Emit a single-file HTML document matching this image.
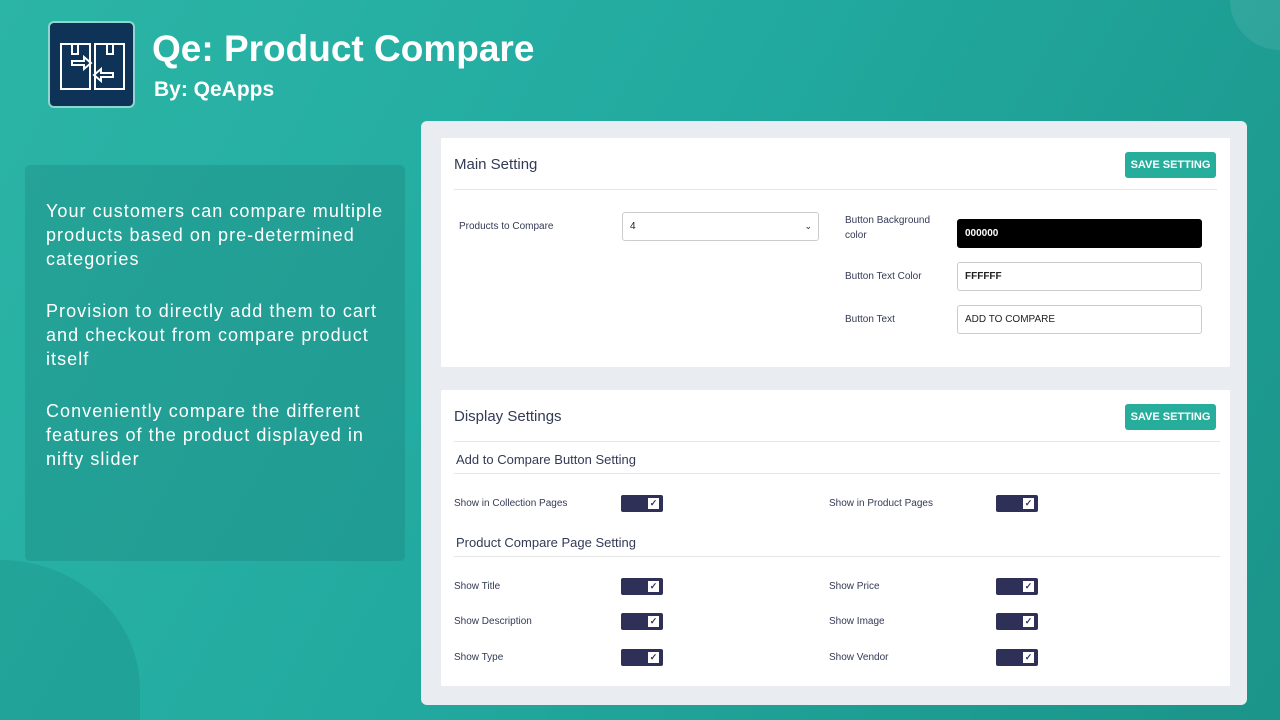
<!DOCTYPE html>
<html><head><style>
*{margin:0;padding:0;box-sizing:border-box}
html,body{width:1280px;height:720px;overflow:hidden}
body{position:relative;font-family:"Liberation Sans",sans-serif;background:linear-gradient(120deg,#2bb5a6 0%,#22aaa0 45%,#1b9489 100%)}
.blob{position:absolute}
.logo{position:absolute;left:48px;top:21px;width:87px;height:87px;background:#0f3357;border:2px solid #8fd6cc;border-radius:6px}
h1{position:absolute;left:152px;top:28px;color:#fff;font-size:37px;font-weight:bold}
.by{position:absolute;left:154px;top:78px;color:#fff;font-size:21px;font-weight:bold}
.left{position:absolute;left:25px;top:165px;width:380px;height:396px;background:rgba(20,90,90,0.18);border-radius:5px;padding:34px 10px 0 21px;color:#fff;font-size:18px;line-height:24px;letter-spacing:1.05px}
.left p{margin-bottom:28px}
.panel{position:absolute;left:421px;top:121px;width:826px;height:584px;background:#e9ecf0;border-radius:6px}
.card{position:absolute;left:20px;width:789px;background:#fff;border-radius:2px}
.ct{position:absolute;left:13px;font-size:15px;color:#333a55}
.btn{position:absolute;right:14px;width:91px;height:26px;background:#26ad9c;color:#fff;font-size:11px;font-weight:bold;text-align:center;line-height:26px;border-radius:3px}
.hr{position:absolute;left:0;right:0;height:1px;background:#e6e6e6}
.lbl{position:absolute;font-size:10px;color:#333a55}
.inp{position:absolute;border:1px solid #ccc;border-radius:3px;font-size:10px;padding-left:7px;color:#222;display:flex;align-items:center}
.sub{position:absolute;left:15px;font-size:13px;color:#333a55}
.tg{position:absolute;width:42px;height:17px;background:#2f3058;border-radius:2px}
.tg::after{content:"✓";position:absolute;right:4px;top:3px;width:11px;height:11px;background:#fff;color:#2f3058;font-size:9px;line-height:11px;text-align:center;font-weight:bold}
</style></head><body>
<div class="blob" style="right:0;top:0;width:50px;height:50px;border-bottom-left-radius:50px;background:rgba(255,255,255,0.08)"></div>
<div class="blob" style="left:0;top:560px;width:140px;height:160px;border-top-right-radius:140px 130px;background:rgba(0,80,80,0.12)"></div>
<div class="logo"><svg width="83" height="83" viewBox="0 0 83 83" fill="none" stroke="#fff" stroke-width="2"><path d="M11 21h29v45H11zM45 21h29v45H45z"/><path d="M22 21v10h6V21M57 21v10h6V21"/><path d="M22 38h12v-4l7 6-7 6v-4H22z"/><path d="M63 50H51v-4l-7 6 7 6v-4h12z"/></svg></div>
<h1>Qe: Product Compare</h1>
<div class="by">By: QeApps</div>
<div class="left"><p>Your customers can compare multiple products based on pre-determined categories</p><p>Provision to directly add them to cart and checkout from compare product itself</p><p>Conveniently compare the different features of the product displayed in nifty slider</p></div>
<div class="panel">
<div class="card" style="top:17px;height:229px">
<div class="ct" style="top:18px">Main Setting</div>
<div class="btn" style="top:14px">SAVE SETTING</div>
<div class="hr" style="top:51px;left:13px;right:13px"></div>
<div class="lbl" style="left:18px;top:83px">Products to Compare</div>
<div class="inp" style="left:181px;top:74px;width:197px;height:29px">4<span style="position:absolute;right:6px;font-size:9px">⌄</span></div>
<div class="lbl" style="left:404px;top:75px;line-height:15px">Button Background<br>color</div>
<div class="inp" style="left:516px;top:81px;width:245px;height:29px;background:#000;color:#fff;border-color:#000;font-weight:bold">000000</div>
<div class="lbl" style="left:404px;top:133px">Button Text Color</div>
<div class="inp" style="left:516px;top:124px;width:245px;height:29px;font-weight:bold">FFFFFF</div>
<div class="lbl" style="left:404px;top:176px">Button Text</div>
<div class="inp" style="left:516px;top:167px;width:245px;height:29px">ADD TO COMPARE</div>
</div>
<div class="card" style="top:269px;height:296px">
<div class="ct" style="top:18px">Display Settings</div>
<div class="btn" style="top:14px">SAVE SETTING</div>
<div class="hr" style="top:51px;left:13px;right:10px"></div>
<div class="sub" style="top:62px">Add to Compare Button Setting</div>
<div class="hr" style="top:83px;left:13px;right:10px"></div>
<div class="lbl" style="left:13px;top:108px">Show in Collection Pages</div><div class="tg" style="left:180px;top:105px"></div>
<div class="lbl" style="left:388px;top:108px">Show in Product Pages</div><div class="tg" style="left:555px;top:105px"></div>
<div class="sub" style="top:145px">Product Compare Page Setting</div>
<div class="hr" style="top:166px;left:13px;right:10px"></div>
<div class="lbl" style="left:13px;top:191px">Show Title</div><div class="tg" style="left:180px;top:188px"></div>
<div class="lbl" style="left:388px;top:191px">Show Price</div><div class="tg" style="left:555px;top:188px"></div>
<div class="lbl" style="left:13px;top:226px">Show Description</div><div class="tg" style="left:180px;top:223px"></div>
<div class="lbl" style="left:388px;top:226px">Show Image</div><div class="tg" style="left:555px;top:223px"></div>
<div class="lbl" style="left:13px;top:262px">Show Type</div><div class="tg" style="left:180px;top:259px"></div>
<div class="lbl" style="left:388px;top:262px">Show Vendor</div><div class="tg" style="left:555px;top:259px"></div>
</div>
</div>
</body></html>
